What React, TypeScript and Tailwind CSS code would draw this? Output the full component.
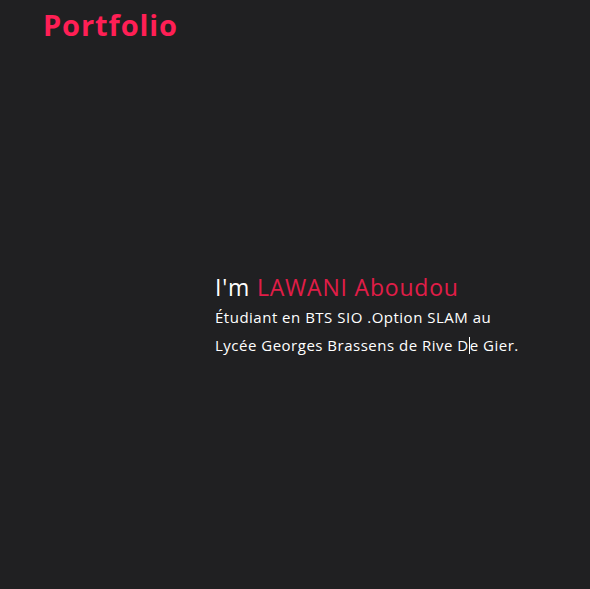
export default function App() {
  return (
    <div className="min-h-[589px] bg-[#202022] font-['Open_Sans',sans-serif] flex flex-col">
      {/* Header */}
      <header className="pl-[43px] pt-[6px]">
        <h1 className="text-[29px] font-bold text-[#ff1f55] leading-[38px] tracking-[0.9px]">Portfolio</h1>
      </header>

      {/* Hero */}
      <section className="flex-1 flex pl-[215px] pt-[228px]">
        <div>
          <h2 className="text-[23px] leading-[30px] tracking-[0.8px] text-white">
            I'm <span className="text-[#e11d48]">LAWANI Aboudou</span>
          </h2>
          <p className="mt-[1px] text-[15px] leading-[28px] tracking-[0.5px] text-white">
            Étudiant en BTS SIO .Option SLAM au
            <br />
            Lycée Georges Brassens de Rive D
            <span className="inline-block w-px h-[17px] bg-white align-[-3px]" />
            e Gier.
          </p>
        </div>
      </section>
    </div>
  );
}
